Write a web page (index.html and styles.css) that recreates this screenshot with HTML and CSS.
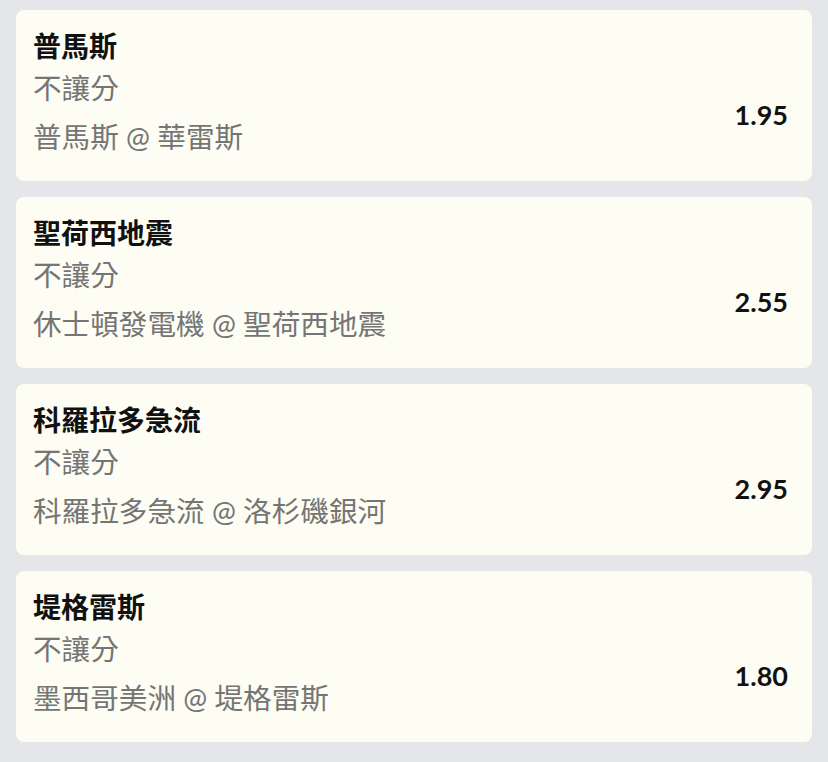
FILE: index.html
```html
<!DOCTYPE html>
<html lang="zh-Hant">
<head>
  <meta charset="UTF-8" />
  <meta name="viewport" content="width=device-width, initial-scale=1.0"/>
  <title>投注單</title>
  <link rel="stylesheet" href="styles.css">
</head>
<body>

  <div class="bet-list">
    <div class="bet-card">
      <div class="pick">普馬斯</div>
      <div class="bet-row">
        <div class="bet-lines">
          <div class="market">不讓分</div>
          <div class="match">普馬斯 @ 華雷斯</div>
        </div>
        <div class="odds">1.95</div>
      </div>
    </div>

    <div class="bet-card">
      <div class="pick">聖荷西地震</div>
      <div class="bet-row">
        <div class="bet-lines">
          <div class="market">不讓分</div>
          <div class="match">休士頓發電機 @ 聖荷西地震</div>
        </div>
        <div class="odds">2.55</div>
      </div>
    </div>

    <div class="bet-card">
      <div class="pick">科羅拉多急流</div>
      <div class="bet-row">
        <div class="bet-lines">
          <div class="market">不讓分</div>
          <div class="match">科羅拉多急流 @ 洛杉磯銀河</div>
        </div>
        <div class="odds">2.95</div>
      </div>
    </div>

    <div class="bet-card">
      <div class="pick">堤格雷斯</div>
      <div class="bet-row">
        <div class="bet-lines">
          <div class="market">不讓分</div>
          <div class="match">墨西哥美洲 @ 堤格雷斯</div>
        </div>
        <div class="odds">1.80</div>
      </div>
    </div>
  </div>

</body>
</html>
```

FILE: styles.css
```css
* { margin: 0; padding: 0; box-sizing: border-box; }

body {
  font-family: 'Lato', 'Noto Sans CJK TC', sans-serif;
  background-color: #e5e6ea;
  color: #111;
}

.bet-list {
  display: flex;
  flex-direction: column;
  gap: 16px;
  padding: 10px 16px 20px;
}

.bet-card {
  background: #fdfdf4;
  border-radius: 8px;
  padding: 16px 24px 22px 17px;
  height: 171px;
}

.pick {
  font-size: 28px;
  font-weight: 700;
  line-height: 40px;
}

.bet-row {
  display: flex;
  justify-content: space-between;
  align-items: center;
}

.market,
.match {
  font-size: 28.6px;
  line-height: 44px;
  color: #757575;
}

.match {
  margin-top: 5px;
}

.odds {
  font-size: 27px;
  font-weight: 700;
  padding-top: 4px;
}
```
